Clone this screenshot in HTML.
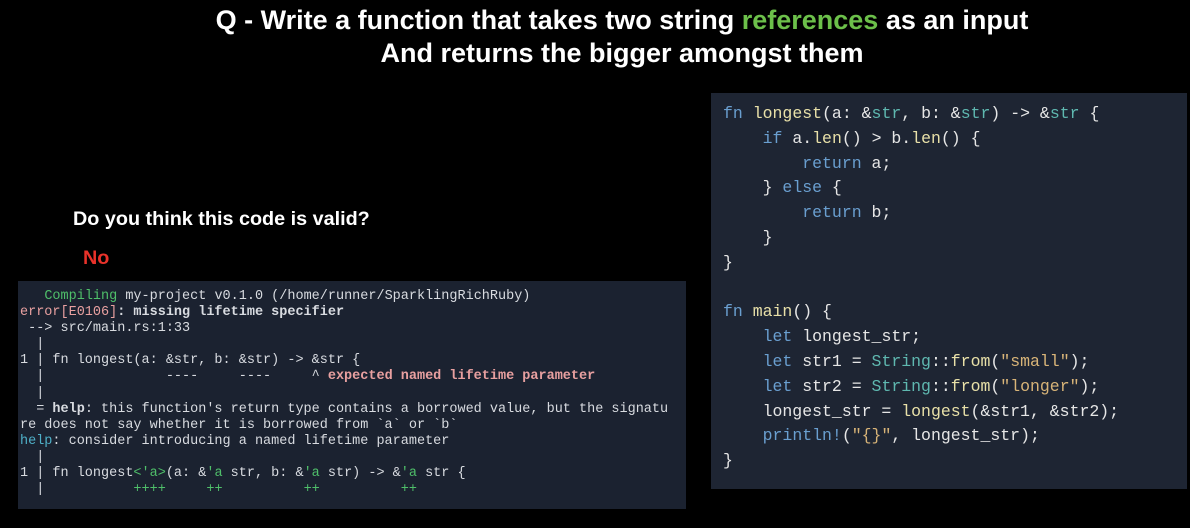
<!DOCTYPE html>
<html><head><meta charset="utf-8"><style>
html,body{margin:0;padding:0;background:#000;width:1190px;height:528px;overflow:hidden;position:relative}
.t{position:absolute;left:27px;width:1190px;text-align:center;color:#fff;font:bold 27px "Liberation Sans",sans-serif}
.g{color:#6cc04a}
.q{position:absolute;color:#fff;font:bold 19.8px "Liberation Sans",sans-serif}
.term{position:absolute;left:18px;top:281px;width:668px;height:228px;background:#1b2230}
.term pre{margin:0;position:absolute;left:2px;top:8px;font:13.5px/16.1px "Liberation Mono",monospace;color:#d8dbe0;white-space:pre}
.code{position:absolute;left:711px;top:93px;width:476px;height:396px;background:#1e2533}
.code pre{margin:0;position:absolute;left:12px;top:9px;font:16.5px/24.8px "Liberation Mono",monospace;color:#e6e6e6;white-space:pre}
.k{color:#6a9fd0}.f{color:#e8e0a8}.s{color:#d8b478}.ty{color:#5fb8b0}
.gr{color:#4fbf6a}.er{color:#e8a0a0;font-weight:bold}.h{color:#4fb0c8}.b{font-weight:bold}
</style></head><body>
<div class="t" style="top:5px">Q - Write a function that takes two string <span class="g">references</span> as an input</div>
<div class="t" style="top:38px">And returns the bigger amongst them</div>
<div class="q" style="left:73px;top:208px">Do you think this code is valid?</div>
<div class="q" style="left:83px;top:247px;color:#e8322a">No</div>
<div class="term"><pre>   <span class="gr">Compiling</span> my-project v0.1.0 (/home/runner/SparklingRichRuby)
<span style="color:#e8a0a0">error[E0106]</span><span class="b">: missing lifetime specifier</span>
 --> src/main.rs:1:33
  |
1 | fn longest(a: &amp;str, b: &amp;str) -> &amp;str {
  |               ----     ----     ^ <span class="er">expected named lifetime parameter</span>
  |
  = <span class="b">help</span>: this function's return type contains a borrowed value, but the signatu
re does not say whether it is borrowed from `a` or `b`
<span class="h">help</span>: consider introducing a named lifetime parameter
  |
1 | fn longest<span class="gr">&lt;'a&gt;</span>(a: &amp;<span class="gr">'a</span> str, b: &amp;<span class="gr">'a</span> str) -> &amp;<span class="gr">'a</span> str {
  |           <span class="gr">++++</span>     <span class="gr">++</span>          <span class="gr">++</span>          <span class="gr">++</span></pre></div>
<div class="code"><pre><span class="k">fn</span> <span class="f">longest</span>(a: &amp;<span class="ty">str</span>, b: &amp;<span class="ty">str</span>) -> &amp;<span class="ty">str</span> {
    <span class="k">if</span> a.<span class="f">len</span>() > b.<span class="f">len</span>() {
        <span class="k">return</span> a;
    } <span class="k">else</span> {
        <span class="k">return</span> b;
    }
}

<span class="k">fn</span> <span class="f">main</span>() {
    <span class="k">let</span> longest_str;
    <span class="k">let</span> str1 = <span class="ty">String</span>::<span class="f">from</span>(<span class="s">"small"</span>);
    <span class="k">let</span> str2 = <span class="ty">String</span>::<span class="f">from</span>(<span class="s">"longer"</span>);
    longest_str = <span class="f">longest</span>(&amp;str1, &amp;str2);
    <span class="k">println!</span>(<span class="s">"{}"</span>, longest_str);
}</pre></div>
</body></html>
